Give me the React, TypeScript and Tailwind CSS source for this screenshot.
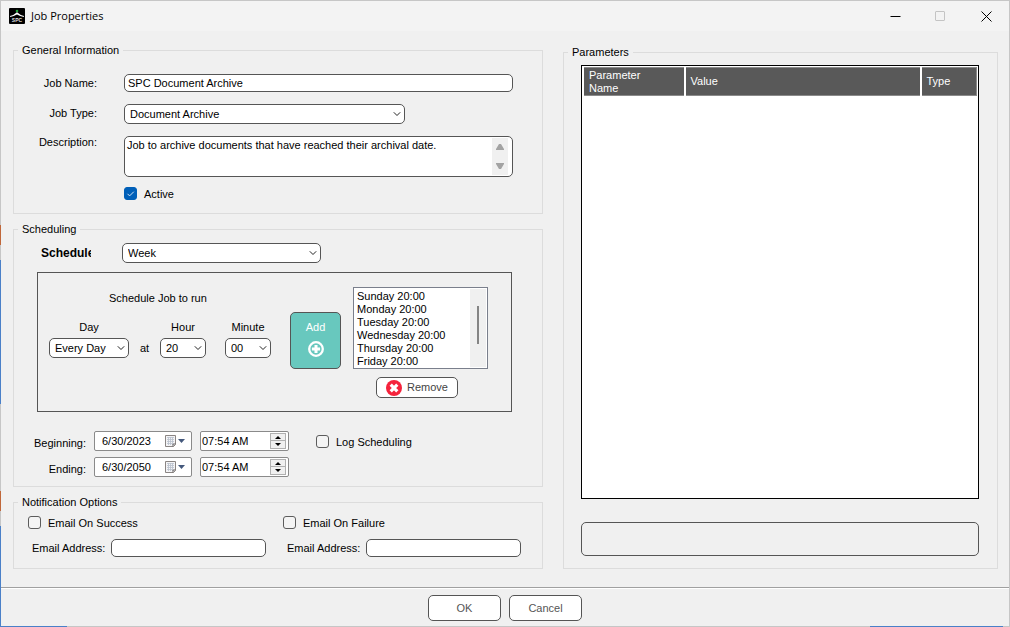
import React, { useState } from 'react';

const control = 'border border-[#555] bg-white text-black outline-none';

interface GroupProps {
    title: string;
    className?: string;
    children: React.ReactNode;
}

const Group: React.FC<GroupProps> = ({ title, className = '', children }) => (
    <fieldset className={`min-w-0 border border-[#dcdcdc] ${className}`}>
        <legend className="ml-1 px-1 leading-[14px]">{title}</legend>
        {children}
    </fieldset>
);

interface DropDownProps {
    label: string;
    id?: string;
    options: string[];
    className: string;
}

const DropDown: React.FC<DropDownProps> = ({ label, id, options, className }) => (
    <div className={`relative ${className}`}>
        <select id={id} aria-label={label} className={`block h-5 w-full appearance-none rounded-[5px] pl-[5px] pr-4 ${control}`}>
            {options.map((o) => (
                <option key={o}>{o}</option>
            ))}
        </select>
        <svg className="pointer-events-none absolute right-1 top-1.5 h-2 w-2" viewBox="0 0 8 8" fill="none" stroke="#222">
            <path d="M0.8 2.3 L4 5.5 L7.2 2.3" />
        </svg>
    </div>
);

interface TickProps {
    label: string;
    checked?: boolean;
    className?: string;
}

const Tick: React.FC<TickProps> = ({ label, checked = false, className = '' }) => {
    const [on, setOn] = useState(checked);
    return (
        <label className={`flex h-[13px] items-center gap-[7px] leading-[14px] ${className}`}>
            <span className="relative block h-[13px] w-[13px]">
                <input
                    type="checkbox"
                    checked={on}
                    onChange={() => setOn(!on)}
                    className="block h-[13px] w-[13px] appearance-none rounded-[3px] border border-[#5c5c5c] bg-[#f4f4f4] checked:border-[#005fb8] checked:bg-[#005fb8]"
                />
                {on && (
                    <svg className="pointer-events-none absolute inset-0" viewBox="0 0 13 13" fill="none" stroke="#cfe2f5">
                        <path d="M3.5 6.8 L5.6 8.9 L9.8 4.7" />
                    </svg>
                )}
            </span>
            {label}
        </label>
    );
};

const DatePicker: React.FC<{ label: string; id: string; value: string }> = ({ label, id, value }) => (
    <div className="flex h-5 w-[98px] items-center rounded-[2px] border border-[#8a8a8a] bg-white">
        <input id={id} aria-label={label} defaultValue={value} className="h-4 w-[69px] min-w-0 pl-[7px] outline-none" />
        <button aria-label="Open calendar" className="flex items-center">
            <svg width="24" height="14" viewBox="0 0 24 14">
                <path d="M1.5 1.5 H11.5 V10.5 L9.5 12.5 H1.5 Z" fill="#f4f4f6" stroke="#8a8583" />
                <path d="M3 3.5h7M3 5.5h7M3 7.5h7M3 9.5h6M4.5 3v8M6.5 3v8M8.5 3v8" stroke="#b9c0cd" strokeWidth="0.8" />
                <path d="M9 12.5 V10 H11.5" fill="none" stroke="#6b6766" />
                <path d="M14 5 H21 L17.5 9 Z" fill="#44587c" />
            </svg>
        </button>
    </div>
);

const TimePicker: React.FC<{ label: string }> = ({ label }) => (
    <div className="flex h-5 w-[89px] items-center rounded-[2px] border border-[#8a8a8a] bg-white pr-0.5">
        <input aria-label={label} defaultValue="07:54 AM" className="h-4 min-w-0 flex-1 pl-px outline-none" />
        <div className="flex h-4 w-4 flex-col border border-[#b0b0b0] bg-[#f0f0f0]">
            <button aria-label="Up" className="flex h-[7px] items-center justify-center border-b border-[#b0b0b0]">
                <svg width="6" height="3" viewBox="0 0 6 3"><path d="M0 3 L3 0 L6 3 Z" /></svg>
            </button>
            <button aria-label="Down" className="flex h-[7px] items-center justify-center">
                <svg width="6" height="3" viewBox="0 0 6 3"><path d="M0 0 L3 3 L6 0 Z" /></svg>
            </button>
        </div>
    </div>
);

const TitleBar: React.FC = () => (
    <header className="flex h-[30px] items-center bg-[#f3f3f3] pl-2 text-black">
        <svg width="16" height="16" viewBox="0 0 16 16">
            <rect width="16" height="16" rx="1" fill="#000" />
            <circle cx="8" cy="3" r="1.3" fill="#22a63c" />
            <path d="M1 8 Q5 7 8 4.2 Q11 7 15 8 L14.8 9 Q11 8.2 8 6.4 Q5 8.2 1.2 9 Z" fill="#fff" />
            <text x="8" y="13.6" textAnchor="middle" fontSize="5" fontWeight="bold" fill="#ddd" fontFamily="Liberation Sans, sans-serif">SPC</text>
        </svg>
        <h1 className="ml-1.5 flex-1 font-['Open_Sans',sans-serif] text-[11px]">Job Properties</h1>
        <button aria-label="Minimize" className="flex w-[45px] justify-center">
            <svg width="11" height="11" viewBox="0 0 11 11"><path d="M0.5 5.5 H10.5" stroke="#000" /></svg>
        </button>
        <button aria-label="Maximize" disabled className="flex w-[45px] justify-center">
            <svg width="11" height="11" viewBox="0 0 11 11"><rect x="0.5" y="0.5" width="9" height="9" rx="0.5" fill="none" stroke="#c4c4c4" /></svg>
        </button>
        <button aria-label="Close" className="flex w-[46px] justify-center">
            <svg width="11" height="11" viewBox="0 0 11 11"><path d="M0.5 0.5 L10.5 10.5 M10.5 0.5 L0.5 10.5" stroke="#000" /></svg>
        </button>
    </header>
);

const General: React.FC = () => (
    <Group title="General Information" className="pb-[13px] pr-[29px]">
        <div className="mt-[17px] grid grid-cols-[83px_1fr] gap-x-[27px]">
            <label htmlFor="name" className="text-right leading-[18px]">Job Name:</label>
            <input id="name" defaultValue="SPC Document Archive" className={`h-[18px] rounded-[5px] px-[3px] ${control}`} />
            <label htmlFor="type" className="mt-3 text-right leading-[18px]">Job Type:</label>
            <DropDown id="type" label="Job Type" options={['Document Archive']} className="mt-3 w-[281px]" />
            <label htmlFor="desc" className="mt-3 text-right leading-[13px]">Description:</label>
            <div className={`mt-3 flex h-[41px] rounded-[5px] pr-1 ${control}`}>
                <textarea
                    id="desc"
                    defaultValue="Job to archive documents that have reached their archival date."
                    className="min-w-0 flex-1 resize-none overflow-hidden px-0.5 py-px leading-[14px] outline-none"
                />
                <div className="my-px flex w-4 flex-col items-center justify-between bg-[#f0f0f0] py-1.5">
                    <svg width="8" height="6" viewBox="0 0 8 6"><path d="M3 0 H5 L8 5 V6 H0 V5 Z" fill="#a3a3a3" /></svg>
                    <svg width="8" height="6" viewBox="0 0 8 6"><path d="M3 6 H5 L8 1 V0 H0 V1 Z" fill="#a3a3a3" /></svg>
                </div>
            </div>
            <Tick label="Active" checked className="col-start-2 mt-2.5" />
        </div>
    </Group>
);

const days = ['Sunday', 'Monday', 'Tuesday', 'Wednesday', 'Thursday', 'Friday', 'Saturday'];

const SchedulePanel: React.FC = () => (
    <div className="ml-[23px] mt-[9px] flex h-[140px] border border-[#555] pl-[11px] pt-3.5">
        <div className="w-[222px]">
            <p className="mt-1 pl-[60px] leading-[14px]">Schedule Job to run</p>
            <div className="mt-[15px] flex items-end">
                <div className="flex flex-col items-center gap-1 leading-[14px]">
                    Day
                    <DropDown label="Day" options={['Every Day', ...days]} className="w-20" />
                </div>
                <span className="w-[31px] text-center leading-5">at</span>
                <div className="flex flex-col items-center gap-1 leading-[14px]">
                    Hour
                    <DropDown label="Hour" options={['20', '21', '22']} className="w-[46px]" />
                </div>
                <div className="ml-[19px] flex flex-col items-center gap-1 leading-[14px]">
                    Minute
                    <DropDown label="Minute" options={['00', '15', '30', '45']} className="w-[46px]" />
                </div>
            </div>
        </div>
        <button className="ml-[19px] mt-[25px] flex h-[57px] w-[51px] flex-col items-center rounded-[5px] border border-[#555] bg-[#68c8be] pt-[7px] leading-[14px] text-white">
            Add
            <svg className="mt-[7px]" width="16" height="16" viewBox="0 0 16 16" fill="none" stroke="#fff">
                <circle cx="8" cy="8" r="6.8" strokeWidth="2.3" />
                <path d="M8 3.9 V12.1 M3.9 8 H12.1" strokeWidth="3" />
            </svg>
        </button>
        <div className="ml-3 w-[135px]">
            <div className="flex h-[82px] w-full border border-[#7a7f8c] bg-white p-px">
                <select
                    multiple
                    aria-label="Scheduled times"
                    className="h-[78px] min-w-0 flex-1 overflow-y-scroll pt-px leading-[13px] outline-none [scrollbar-width:none]"
                >
                    {days.map((d) => (
                        <option key={d} className="h-[13px] min-h-0 p-0 pl-0.5 leading-[13px]">{d} 20:00</option>
                    ))}
                </select>
                <div className="flex w-4 justify-center bg-[#f0f0f0] pt-[17px]">
                    <div className="h-[38px] w-0.5 bg-[#858585]" />
                </div>
            </div>
            <button className="ml-[23px] mt-2 flex h-[21px] w-[82px] items-center gap-[5px] rounded-[5px] border border-[#555] bg-white pl-[9px] text-[#444]">
                <svg width="16" height="16" viewBox="0 0 16 16">
                    <circle cx="8" cy="8" r="8" fill="#f5233c" />
                    <path d="M4.7 4.7 L11.3 11.3 M11.3 4.7 L4.7 11.3" stroke="#fff" strokeWidth="3.2" />
                </svg>
                Remove
            </button>
        </div>
    </div>
);

const Scheduling: React.FC = () => (
    <Group title="Scheduling" className="mt-2 pb-[9px] pr-[30px]">
        <div className="mt-[7px] flex pl-[27px]">
            <label htmlFor="schedule" className="w-[50px] overflow-hidden text-[12px] font-bold leading-5">Schedule</label>
            <DropDown id="schedule" label="Schedule" options={['Week', 'Day', 'Month']} className="ml-[31px] w-[199px]" />
        </div>
        <SchedulePanel />
        <div className="mt-[19px] flex gap-[27px]">
            <div className="grid grid-cols-[72px_98px_89px] gap-x-2 gap-y-1.5">
                <label htmlFor="begin" className="self-end text-right leading-4">Beginning:</label>
                <DatePicker id="begin" label="Beginning" value="6/30/2023" />
                <TimePicker label="Beginning time" />
                <label htmlFor="end" className="self-end text-right leading-4">Ending:</label>
                <DatePicker id="end" label="Ending" value="6/30/2050" />
                <TimePicker label="Ending time" />
            </div>
            <Tick label="Log Scheduling" className="mt-1" />
        </div>
    </Group>
);

const EmailOption: React.FC<{ event: string }> = ({ event }) => (
    <div className="w-[255px]">
        <Tick label={`Email On ${event}`} />
        <label className="mt-2.5 flex items-center justify-between pl-1 pr-[17px] leading-[18px]">
            Email Address:
            <input className={`h-[18px] w-[155px] rounded-[5px] px-1 ${control}`} />
        </label>
    </div>
);

const Parameters: React.FC = () => (
    <Group title="Parameters" className="mt-0.5 pb-3">
        <div className="flex flex-col pl-[17px] pr-[18px]">
            <div className="mt-1.5 h-[434px] border border-black bg-white p-px">
                <table className="w-full table-fixed border border-[#8a8a8a] bg-[#595959] text-left leading-[13px] text-white">
                    <thead>
                        <tr className="h-7">
                            <th className="w-[101px] border-l border-white pl-[5px] pr-10 font-normal">Parameter Name</th>
                            <th className="border-l-2 border-white pl-[5px] font-normal">Value</th>
                            <th className="w-14 border-l-2 border-white pl-[5px] font-normal">Type</th>
                        </tr>
                    </thead>
                </table>
            </div>
            <input aria-label="Parameter description" readOnly className="mt-[23px] h-[34px] w-full rounded-[5px] border border-[#555] bg-[#f0f0f0] px-2 outline-none" />
        </div>
    </Group>
);

// slivers of the desktop showing past the window's left and bottom edges
const DesktopEdge: React.FC = () => (
    <div className="pointer-events-none absolute -inset-px flex flex-col justify-between">
        <div className="flex w-px flex-1 flex-col pt-[225px]">
            <div className="h-5 bg-[#c0673a]" />
            <div className="mt-[15px] h-36 bg-[#4a80c8]" />
            <div className="mt-[87px] h-5 bg-[#c0673a]" />
            <div className="mt-[15px] flex-1 bg-[#4a80c8]" />
        </div>
        <div className="flex h-px justify-between pr-[7px]">
            <div className="w-[67px] bg-[#4a80c8]" />
            <div className="w-[133px] bg-[#4a80c8]" />
        </div>
    </div>
);

const App: React.FC = () => (
    <div className="relative flex min-h-screen flex-col border border-[#c6c6c6] bg-[#f0f0f0] font-['Liberation_Sans',sans-serif] text-[11px] text-black">
        <TitleBar />
        <main className="grid flex-1 grid-cols-[530fr_435fr] items-start gap-x-5 pb-[18px] pl-3 pr-[11px] pt-3">
            <div>
                <General />
                <Scheduling />
                <Group title="Notification Options" className="mt-2 pb-[11px]">
                    <div className="mt-[7px] flex pl-3.5">
                        <EmailOption event="Success" />
                        <EmailOption event="Failure" />
                    </div>
                </Group>
            </div>
            <Parameters />
        </main>
        <footer className="flex justify-center gap-2 border-t border-[#a0a0a0] pb-[5px] shadow-[inset_0_1px_0_#fff] pt-[7px] text-[#555]">
            <button className="h-[26px] w-[73px] rounded-[5px] border border-[#555] bg-white">OK</button>
            <button className="h-[26px] w-[73px] rounded-[5px] border border-[#555] bg-white">Cancel</button>
        </footer>
        <DesktopEdge />
    </div>
);

export default App;
